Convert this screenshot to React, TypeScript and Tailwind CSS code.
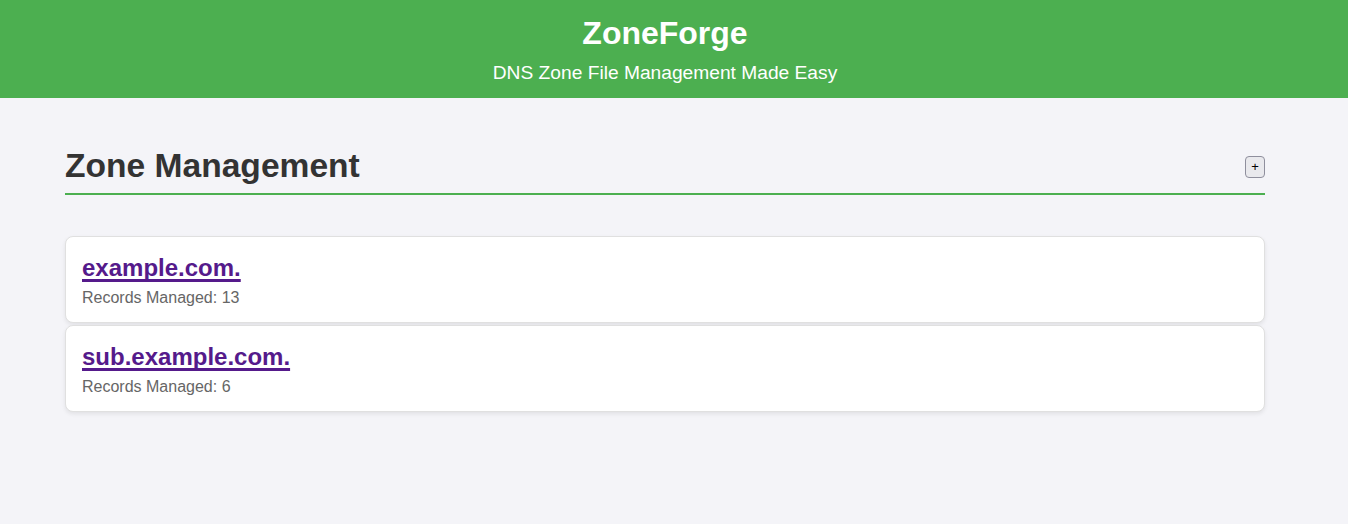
import React from 'react';

const zones = [
  { name: 'example.com.', records: 13 },
  { name: 'sub.example.com.', records: 6 },
];

export default function App() {
  return (
    <div className="min-h-[524px] bg-[#f4f4f8] font-['Liberation_Sans',Arial,sans-serif] text-[#333]">
      {/* Header */}
      <header className="bg-[#4caf50] pt-[15px] pb-[14px] pr-[18px] text-center text-white">
        <h1 className="text-[32px] font-bold leading-[37px]">ZoneForge</h1>
        <p className="mt-[10px] text-[19.2px] leading-[22px]">
          DNS Zone File Management Made Easy
        </p>
      </header>

      <main className="ml-[65px] w-[1200px] pt-[48px]">
        {/* Title row */}
        <div className="flex items-center justify-between border-b-2 border-[#4caf50] pb-[8px]">
          <h2 className="text-[33.6px] font-bold leading-[39px] text-[#333]">
            Zone Management
          </h2>
          <button className="mt-[2px] flex h-[22px] w-[20px] items-center justify-center rounded-[4px] border border-[#8f8f9d] bg-[#e9e9ed] text-[13px] leading-none text-black">
            +
          </button>
        </div>

        {/* Zone list */}
        <div className="mt-[41px] flex flex-col gap-[2px]">
          {zones.map((z) => (
            <div
              key={z.name}
              className="rounded-[8px] border border-[#e0e0e0] bg-white px-[16px] pt-[17px] pb-[15px] shadow-[0_2px_4px_rgba(0,0,0,0.08)]"
            >
              <h3 className="text-[24px] font-bold leading-[28px]">
                <a
                  href="#"
                  className="text-[#551a8b] underline decoration-[2.5px] underline-offset-[3px] [text-decoration-skip-ink:none]"
                >
                  {z.name}
                </a>
              </h3>
              <p className="mt-[7px] text-[16px] leading-[18px] text-[#666]">
                Records Managed: {z.records}
              </p>
            </div>
          ))}
        </div>
      </main>
    </div>
  );
}
